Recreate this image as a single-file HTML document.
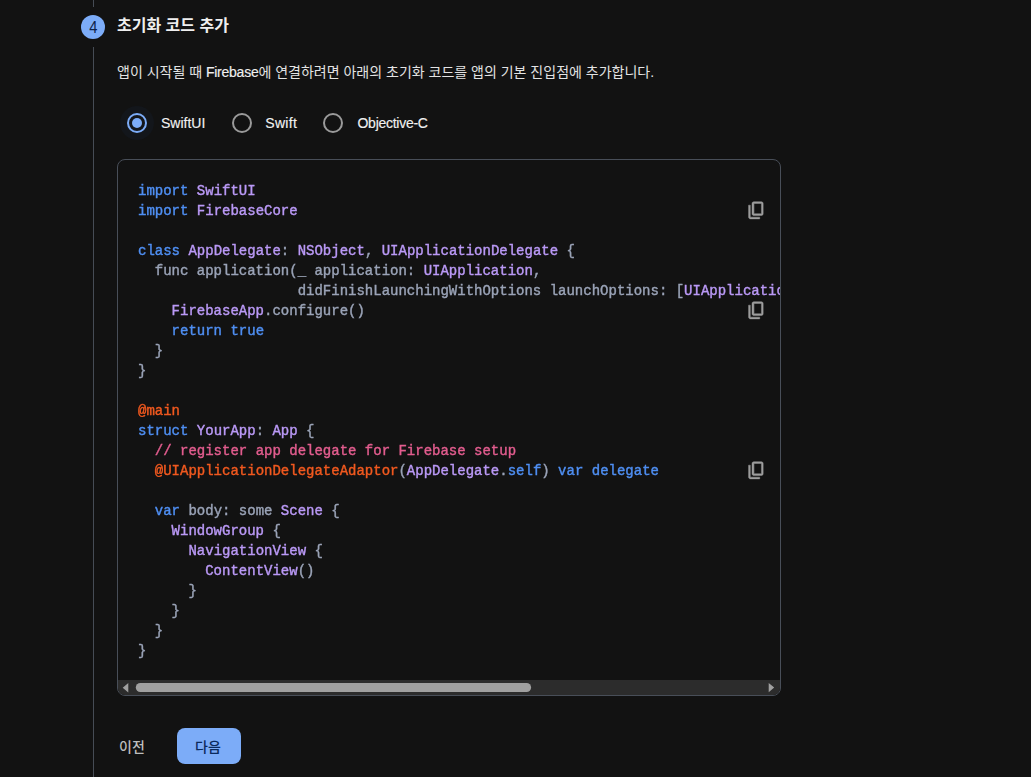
<!DOCTYPE html>
<html lang="ko"><head><meta charset="utf-8"><title>Firebase</title>
<style>
html,body{margin:0;padding:0}
body{width:1031px;height:777px;overflow:hidden;background:#121212;position:relative;font-family:"Liberation Sans",sans-serif;color:#e3e3e3;font-size:14px}
.vl{position:absolute;left:93px;width:1px;background:#464c55}
.step{position:absolute;left:81px;top:15px;width:24px;height:24px;border-radius:50%;background:#7cacf8;color:#0c2149;font-size:16px;line-height:25px;text-align:center}
.g{position:absolute;overflow:visible;display:block}
.tx{position:absolute;white-space:nowrap;color:#e3e3e3;margin:0;font-weight:normal;font-family:"Liberation Sans","Noto Sans CJK KR",sans-serif}
.lat{position:absolute;white-space:nowrap;line-height:16px;color:#f0f0f0;-webkit-text-stroke:0.15px}
.radio{position:absolute;top:113px;width:20px;height:20px;box-sizing:border-box;border:2px solid #9a9a9a;border-radius:50%}
.radio.on{border-color:#7cacf8}
.radio.on::after{content:"";position:absolute;left:3px;top:3px;width:10px;height:10px;border-radius:50%;background:#7cacf8}
.halo{position:absolute;left:120px;top:106px;width:34px;height:34px;border-radius:50%;background:#13161b}
.box{position:absolute;left:117px;top:159px;width:662px;height:535px;border:1px solid #484e58;border-radius:8px;overflow:hidden;background:#121212}
pre{position:absolute;left:20px;top:21px;margin:0;font-family:"Liberation Mono",monospace;font-size:14px;line-height:20px;color:#9aa3b7;white-space:pre;will-change:transform;-webkit-text-stroke:0.4px}
.k{color:#4f8ff3}.t{color:#ba99f6}.a{color:#f1591f}.c{color:#e35d8f}
.cp{position:absolute;left:627.75px}
.sb{position:absolute;left:0;top:520px;display:block}
.btn{position:absolute;left:177px;top:728px;width:64px;height:36px;border-radius:8px;background:#7cacf8}
</style></head><body>
<div class="vl" style="top:0;height:7px"></div>
<div class="vl" style="top:47px;height:730px"></div>
<div class="step"><span style="display:inline-block;transform:scaleX(.92)">4</span></div>
<h2 class="tx" style="left:117px;top:16px;font-size:16px;line-height:20px;color:#efefef;font-weight:bold">초기화 코드 추가</h2>
<p class="tx" style="left:117px;top:63px;line-height:18px;color:#e3e3e3">앱이 시작될 때 <span class="lat" style="position:static;letter-spacing:-0.25px;color:#f0f0f0">Firebase</span>에 연결하려면 아래의 초기화 코드를 앱의 기본 진입점에 추가합니다.</p>
<div class="halo"></div>
<div class="radio on" style="left:127px"></div><span class="lat" style="left:161px;top:115px">SwiftUI</span>
<div class="radio" style="left:232px"></div><span class="lat" style="left:265.3px;top:115px;letter-spacing:0.3px">Swift</span>
<div class="radio" style="left:323px"></div><span class="lat" style="left:357.5px;top:115px;letter-spacing:-0.27px">Objective-C</span>
<div class="box">
<pre><span class="k">import</span> <span class="t">SwiftUI</span>
<span class="k">import</span> <span class="t">FirebaseCore</span>

<span class="k">class</span> <span class="t">AppDelegate</span>: <span class="t">NSObject</span>, <span class="t">UIApplicationDelegate</span> {
  func application(_ application: <span class="t">UIApplication</span>,
                   didFinishLaunchingWithOptions launchOptions: [<span class="t">UIApplication</span>.LaunchOptionsKey : Any]? = nil) -&gt; Bool {
    <span class="t">FirebaseApp</span>.configure()
    <span class="k">return</span> <span class="k">true</span>
  }
}

<span class="a">@main</span>
<span class="k">struct</span> <span class="t">YourApp</span>: <span class="t">App</span> {
  <span class="c">// register app delegate for Firebase setup</span>
  <span class="a">@UIApplicationDelegateAdaptor</span>(<span class="t">AppDelegate</span>.<span class="k">self</span>) <span class="k">var</span> <span class="k">delegate</span>

  <span class="k">var</span> body: some <span class="t">Scene</span> {
    <span class="t">WindowGroup</span> {
      <span class="t">NavigationView</span> {
        <span class="t">ContentView</span>()
      }
    }
  }
}</pre>
<svg class="cp" style="top:39.9px" width="20.6" height="20.6" viewBox="0 0 24 24" aria-hidden="true"><path fill="#9e9e9e" stroke="#9e9e9e" stroke-width=".5" stroke-linejoin="round" d="M9 18q-.83 0-1.41-.59T7 16V4q0-.83.59-1.41T9 2h9q.83 0 1.41.59T20 4v12q0 .83-.59 1.41T18 18H9Zm0-2h9V4H9v12ZM5 22q-.83 0-1.41-.59T3 20V6h2v14h11v2H5Zm4-6V4v12Z"/></svg><svg class="cp" style="top:139.9px" width="20.6" height="20.6" viewBox="0 0 24 24" aria-hidden="true"><path fill="#9e9e9e" stroke="#9e9e9e" stroke-width=".5" stroke-linejoin="round" d="M9 18q-.83 0-1.41-.59T7 16V4q0-.83.59-1.41T9 2h9q.83 0 1.41.59T20 4v12q0 .83-.59 1.41T18 18H9Zm0-2h9V4H9v12ZM5 22q-.83 0-1.41-.59T3 20V6h2v14h11v2H5Zm4-6V4v12Z"/></svg><svg class="cp" style="top:299.9px" width="20.6" height="20.6" viewBox="0 0 24 24" aria-hidden="true"><path fill="#9e9e9e" stroke="#9e9e9e" stroke-width=".5" stroke-linejoin="round" d="M9 18q-.83 0-1.41-.59T7 16V4q0-.83.59-1.41T9 2h9q.83 0 1.41.59T20 4v12q0 .83-.59 1.41T18 18H9Zm0-2h9V4H9v12ZM5 22q-.83 0-1.41-.59T3 20V6h2v14h11v2H5Zm4-6V4v12Z"/></svg>
<svg class="sb" width="662" height="15" viewBox="0 0 662 15" aria-hidden="true"><rect width="662" height="15" fill="#2c2c2c"/><path fill="#a0a0a0" d="M4.7 7.7 10.3 3v9.4zM656.2 7.6 650.7 2.9v9.4z"/><rect x="17.8" y="3" width="395.3" height="9" rx="4.5" fill="#a0a0a0"/></svg>
</div>
<span class="tx" style="left:119px;top:738px;line-height:18px;color:#bdbdbd;font-weight:500">이전</span>
<div class="btn"></div>
<span class="tx" style="left:195px;top:738px;line-height:18px;color:#0b2a5c;font-weight:500">다음</span>
</body></html>
